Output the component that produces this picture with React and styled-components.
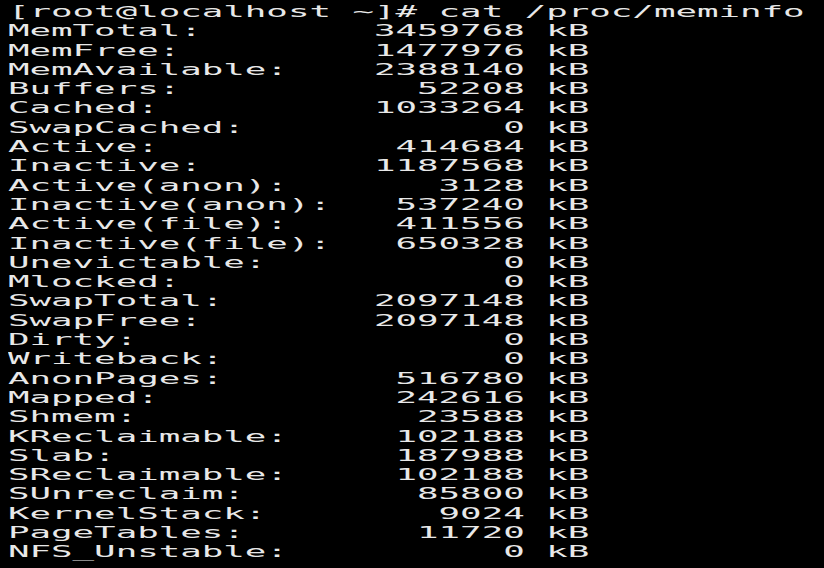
import React from "react";
import styled, { createGlobalStyle } from "styled-components";

const meminfo = [
  ["MemTotal", 3459768],
  ["MemFree", 1477976],
  ["MemAvailable", 2388140],
  ["Buffers", 52208],
  ["Cached", 1033264],
  ["SwapCached", 0],
  ["Active", 414684],
  ["Inactive", 1187568],
  ["Active(anon)", 3128],
  ["Inactive(anon)", 537240],
  ["Active(file)", 411556],
  ["Inactive(file)", 650328],
  ["Unevictable", 0],
  ["Mlocked", 0],
  ["SwapTotal", 2097148],
  ["SwapFree", 2097148],
  ["Dirty", 0],
  ["Writeback", 0],
  ["AnonPages", 516780],
  ["Mapped", 242616],
  ["Shmem", 23588],
  ["KReclaimable", 102188],
  ["Slab", 187988],
  ["SReclaimable", 102188],
  ["SUnreclaim", 85800],
  ["KernelStack", 9024],
  ["PageTables", 11720],
  ["NFS_Unstable", 0],
];

// same layout as the kernel prints it: label padded to 16, value right aligned in 8
const formatRow = ([label, value]) =>
  `${(label + ":").padEnd(16)}${String(value).padStart(8)} kB`;

function App() {
  return (
    <>
      <GlobalStyle />
      <Terminal>
        <Screen>
          <Line>[root@localhost ~]# cat /proc/meminfo</Line>
          {meminfo.map((row) => (
            <Line key={row[0]}>{formatRow(row)}</Line>
          ))}
        </Screen>
      </Terminal>
    </>
  );
}

export default App;

const GlobalStyle = createGlobalStyle`
  html, body {
    margin: 0;
    padding: 0;
    background: #000;
    width: 824px;
    height: 568px;
    overflow: hidden;
  }
`;

const Terminal = styled.div`
  width: 824px;
  height: 568px;
  background: #000;
  overflow: hidden;
  padding: 2px 0 0 8px;
  box-sizing: border-box;
`;

const Screen = styled.div`
  transform: scaleX(2.235);
  transform-origin: left top;
  width: 360px;
`;

const Line = styled.div`
  font-family: "DejaVu Sans Mono", "Liberation Mono", monospace;
  font-size: 16px;
  line-height: 19.3px;
  height: 19.3px;
  color: #e8e8e8;
  white-space: pre;
`;
